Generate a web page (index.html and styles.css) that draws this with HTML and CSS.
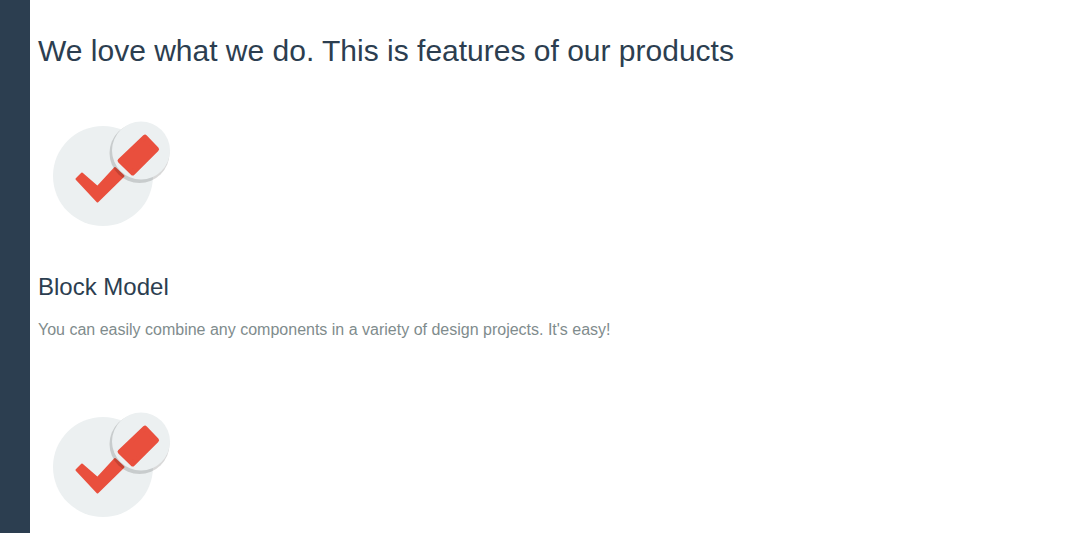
FILE: index.html
```html
<!DOCTYPE html>
<html lang="en">
<head>
  <meta charset="UTF-8">
  <title>Features</title>
  <link rel="stylesheet" href="styles.css">
</head>
<body>
  <div class="sidebar"></div>
  <main class="content">
    <h1>We love what we do. This is features of our products</h1>

    <section class="feature">
      <svg class="feature-icon" width="120" height="110" viewBox="0 0 120 110">
        <circle cx="51" cy="56" r="50" fill="#ecf0f1"/>
        <path d="M24.500 59 L30 53.500 L45.500 67 L63 48 L71.500 56 L45.500 81.500 Z" fill="#e94f3d" stroke="#e94f3d" stroke-width="2" stroke-linejoin="round"/>
        <circle cx="87.500" cy="33" r="30" fill="#000" fill-opacity=".15"/>
        <circle cx="89" cy="30.500" r="29" fill="#ecf0f1"/>
        <path d="M93 17.100 L104.500 29.300 L80.700 52.900 L68.100 40.700 Z" fill="#e94f3d" stroke="#e94f3d" stroke-width="5" stroke-linejoin="round"/>
      </svg>
      <h2>Block Model</h2>
      <p>You can easily combine any components in a variety of design projects. It's easy!</p>
    </section>

    <section class="feature">
      <svg class="feature-icon" width="120" height="110" viewBox="0 0 120 110">
        <circle cx="51" cy="56" r="50" fill="#ecf0f1"/>
        <path d="M24.500 59 L30 53.500 L45.500 67 L63 48 L71.500 56 L45.500 81.500 Z" fill="#e94f3d" stroke="#e94f3d" stroke-width="2" stroke-linejoin="round"/>
        <circle cx="87.500" cy="33" r="30" fill="#000" fill-opacity=".15"/>
        <circle cx="89" cy="30.500" r="29" fill="#ecf0f1"/>
        <path d="M93 17.100 L104.500 29.300 L80.700 52.900 L68.100 40.700 Z" fill="#e94f3d" stroke="#e94f3d" stroke-width="5" stroke-linejoin="round"/>
      </svg>
    </section>
  </main>
</body>
</html>
```

FILE: styles.css
```css
html, body {
  height: 100%;
}
body {
  margin: 0;
  display: flex;
  overflow: hidden;
  font-family: "Liberation Sans", Arial, sans-serif;
  color: #2c3e50;
  background: #fff;
}
.sidebar {
  width: 30px;
  flex-shrink: 0;
  background: #2c3e50;
}
.content {
  flex: 1;
  padding: 0 8px;
}
h1 {
  margin: 33px 0 0;
  font-size: 30px;
  font-weight: 400;
  line-height: 36px;
}
.feature {
  padding-top: 51px;
}
.feature + .feature {
  padding-top: 69px;
}
.feature-icon {
  display: block;
  margin-left: 14px;
}
h2 {
  margin: 42px 0 0;
  font-size: 24px;
  font-weight: 400;
  line-height: 30px;
}
p {
  margin: 16px 0 0;
  font-size: 16px;
  line-height: 24px;
  color: #7f8c8d;
}
```
